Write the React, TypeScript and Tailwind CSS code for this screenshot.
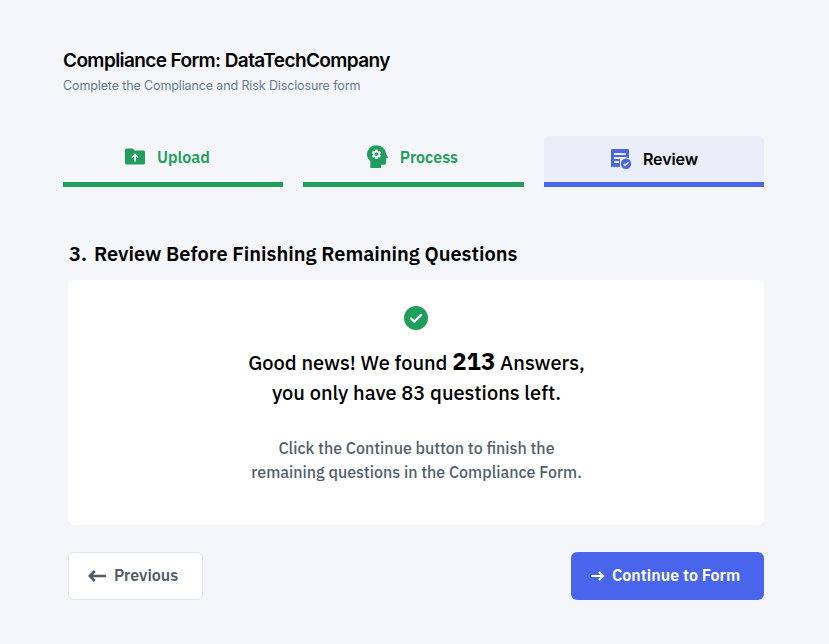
import React from "react";

function UploadIcon() {
  return (
    <svg width="20" height="17" viewBox="0 0 20 17" className="block">
      <path
        fill="#219e5c"
        d="M1.500 0.400h6.100l2.200 2.200H18.500a1.500 1.500 0 0 1 1.500 1.500V15.100a1.500 1.500 0 0 1-1.500 1.500H1.500a1.500 1.500 0 0 1-1.500-1.500V1.900a1.500 1.500 0 0 1 1.500-1.500z"
      />
      <path fill="#f5f6fa" d="M10 5.300l3.600 3.700-1.100 1.100-1.500-1.500v5H9V8.600l-1.500 1.500-1.100-1.100z" />
    </svg>
  );
}

function ProcessIcon() {
  return (
    <svg width="21" height="24" viewBox="0 0 21 24" className="block">
      <path
        fill="#219e5c"
        d="M9.400 0.200c5.100 0 9.200 3.600 9.700 8.500l1.800 3.400c.2.500-.1 1-.6 1h-1.200v4.900a1.800 1.800 0 0 1-1.800 1.800h-3.300v3.300H3.300v-7.200C1.200 14.500 0 12.300 0 9.600 0 4.400 4.200 0.200 9.400 0.200z"
      />
      <g transform="translate(9.400 9.300)" fill="#f5f6fa">
        <circle r="3.500" />
        <rect x="-1.200" y="-4.700" width="2.400" height="9.400" rx="0.300" />
        <rect x="-1.200" y="-4.700" width="2.400" height="9.400" rx="0.300" transform="rotate(60)" />
        <rect x="-1.200" y="-4.700" width="2.400" height="9.400" rx="0.300" transform="rotate(120)" />
        <circle r="1.700" fill="#219e5c" />
      </g>
    </svg>
  );
}

function ReviewIcon() {
  return (
    <svg width="21" height="20" viewBox="0 0 21 20" className="block">
      <path
        fill="#4965eb"
        d="M1.200 0h15.600a1.200 1.200 0 0 1 1.200 1.200V10H9v8.500l-1.300-1-1.500 1-1.500-1-1.500 1-1.500-1-1.700 1V1.200A1.200 1.200 0 0 1 1.200 0z"
      />
      <path stroke="#ebedf8" strokeWidth="2" d="M3 5H15M3 9H15M3 13H8" />
      <circle cx="15" cy="14.800" r="6.200" fill="#ebedf8" />
      <circle cx="15" cy="14.800" r="5.200" fill="#4965eb" />
      <path d="M12.600 14.900l1.700 1.600 3.200-3.300" stroke="#ebedf8" strokeWidth="1.500" fill="none" />
    </svg>
  );
}

export default function App() {
  return (
    <main className="h-[644px] w-[829px] overflow-hidden bg-[#f5f6fa] pl-[63px] pr-[65px] pt-[48px] font-['IBM_Plex_Sans',Roboto,sans-serif] text-black">
      <header className="font-['Inter',sans-serif]">
        <h1 className="h-6 whitespace-nowrap pt-px text-[19px] font-semibold leading-6 tracking-[-0.600px]">
          Compliance Form: DataTechCompany
        </h1>
        <p className="mt-[3px] h-5 whitespace-nowrap pt-px text-[12.500px] leading-5 tracking-[-0.120px] text-[#647a94]">
          Complete the Compliance and Risk Disclosure form
        </p>
      </header>

      <nav className="mt-[41px] flex h-[51px] justify-between text-base font-semibold">
        <div className="flex w-[220.400px] border-b-[5px] border-[#219e5c] pl-[62px] text-[#219e5c]">
          <span className="pt-[12px]"><UploadIcon /></span>
          <span className="ml-[12px] mt-[9px] h-6 whitespace-nowrap leading-6">Upload</span>
        </div>
        <div className="flex w-[220.400px] border-b-[5px] border-[#219e5c] pl-[63.500px] text-[#219e5c]">
          <span className="pt-[9px]"><ProcessIcon /></span>
          <span className="ml-[12px] mt-[9px] h-6 whitespace-nowrap leading-6">Process</span>
        </div>
        <div className="flex w-[220.400px] rounded-t-[5px] border-b-[5px] border-[#4965eb] bg-[#ebedf8] pl-[67.400px]">
          <span className="pt-[13px]"><ReviewIcon /></span>
          <span className="ml-[11px] mt-[11px] h-6 whitespace-nowrap font-['Inter',sans-serif] font-semibold leading-6 tracking-[-0.100px]">Review</span>
        </div>
      </nav>

      <section className="ml-[5px] mt-[53px]">
        <h2 className="flex h-7 gap-[7px] whitespace-nowrap pl-[1px] text-[20px] font-semibold leading-7">
          <span>3.</span>
          <span>Review Before Finishing Remaining Questions</span>
        </h2>
        <div className="mt-[12px] flex h-[245px] w-[696px] flex-col items-center rounded-[6px] bg-white pt-[26px]">
          <svg width="24" height="24" viewBox="0 0 24 24" className="block">
            <circle cx="12" cy="12" r="12" fill="#219e5c" />
            <path d="M7 12.500l3.300 3.100 6.900-6.700" stroke="white" strokeWidth="2.200" strokeLinecap="round" strokeLinejoin="round" fill="none" />
          </svg>
          <div className="mt-[18px] pl-px text-center text-[20px] font-medium">
            <p className="h-[30px] whitespace-nowrap leading-[26px]">
              Good news! We found <strong className="text-[24px] font-bold">213</strong> Answers,
            </p>
            <p className="h-[30px] whitespace-nowrap leading-[30px]">you only have 83 questions left.</p>
          </div>
          <div className="mt-[28px] pl-px text-center text-base font-medium leading-6 text-[#525f6e]">
            <p className="whitespace-nowrap">Click the Continue button to finish the</p>
            <p className="whitespace-nowrap">remaining questions in the Compliance Form.</p>
          </div>
        </div>
        <div className="mt-[27px] flex w-[696px] justify-between text-base font-semibold">
          <button className="flex h-12 w-[135px] items-center rounded-[6px] border border-[#e1e7ef] bg-white pl-[19px] text-[#525c68]">
            <svg width="18" height="12" viewBox="0 0 18 12" fill="none" stroke="currentColor" strokeWidth="2.600">
              <path d="M18 6H2M6.800 1L1.800 6l5 5" />
            </svg>
            <span className="ml-2 whitespace-nowrap pb-[2px]">Previous</span>
          </button>
          <button className="flex h-12 w-[193px] items-center rounded-[6px] bg-[#4965eb] pl-[19.500px] text-white">
            <svg width="14" height="10" viewBox="0 0 14 10" fill="none" stroke="currentColor" strokeWidth="2.200">
              <path d="M0 5h12M8 1l4 4-4 4" />
            </svg>
            <span className="ml-[7.500px] whitespace-nowrap pb-[2px] tracking-[0.040px]">Continue to Form</span>
          </button>
        </div>
      </section>
    </main>
  );
}
